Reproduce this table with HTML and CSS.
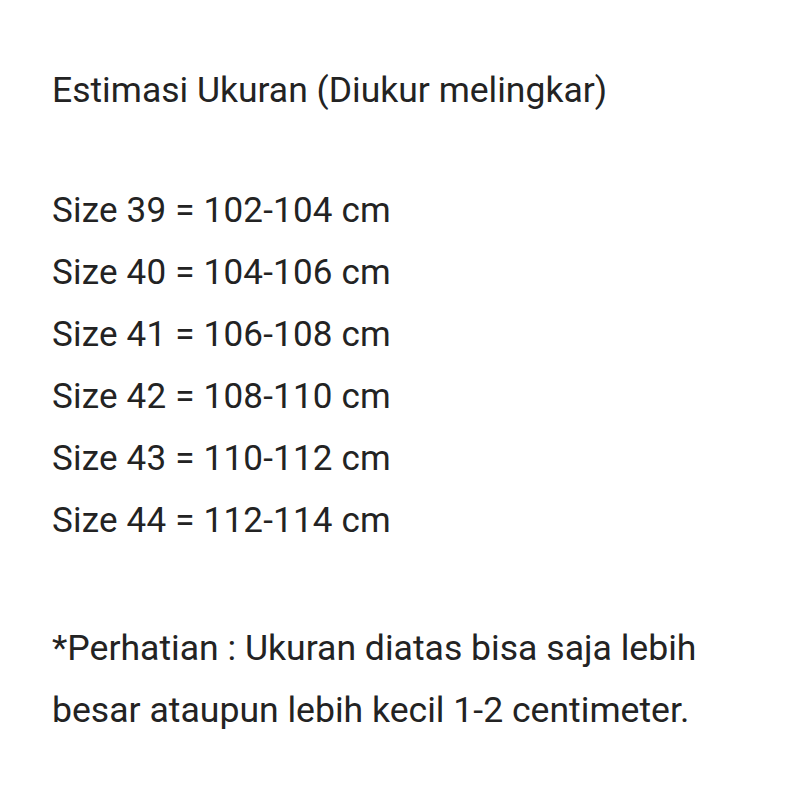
FILE: index.html
```html
<!DOCTYPE html>
<html>
<head>
<meta charset="utf-8">
<link rel="stylesheet" href="styles.css">
</head>
<body>
<div class="page">
  <p class="title">Estimasi Ukuran (Diukur melingkar)</p>
  <ul class="sizes">
    <li>Size 39 = 102-104 cm</li>
    <li>Size 40 = 104-106 cm</li>
    <li>Size 41 = 106-108 cm</li>
    <li>Size 42 = 108-110 cm</li>
    <li>Size 43 = 110-112 cm</li>
    <li>Size 44 = 112-114 cm</li>
  </ul>
  <p class="note">*Perhatian : Ukuran diatas bisa saja lebih<br>besar ataupun lebih kecil 1-2 centimeter.</p>
</div>
</body>
</html>
```
FILE: styles.css
```css
html, body {
  margin: 0;
  padding: 0;
  background: #ffffff;
}
.page {
  width: 800px;
  height: 800px;
  box-sizing: border-box;
  padding: 59px 0 0 52px;
  font-family: Roboto, "Noto Sans", sans-serif;
  color: #232323;
  font-size: 35px;
  line-height: 62px;
}
.title {
  margin: 0 0 59px 0;
  font-size: 35.5px;
}
.sizes {
  list-style: none;
  margin: 0 0 65px 0;
  padding: 0;
  font-size: 35px;
  letter-spacing: 0.2px;
}
.note {
  margin: 0;
  font-size: 35.6px;
}
```
